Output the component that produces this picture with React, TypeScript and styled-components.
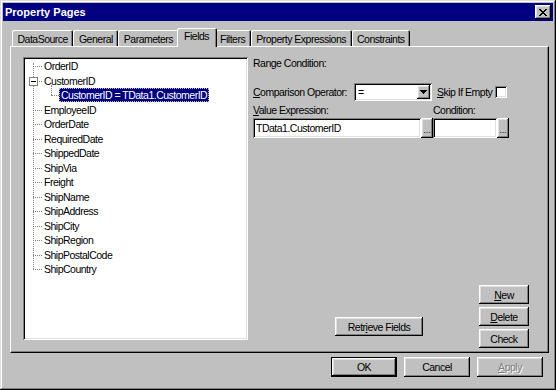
import React from "react"
import styled, { createGlobalStyle, css } from "styled-components"

const GlobalStyle = createGlobalStyle`
  html, body {
    margin: 0;
    padding: 0;
    background: #c0c0c0;
  }
  body {
    font-family: "Liberation Sans", Arial, sans-serif;
    font-size: 10.5px;
    letter-spacing: -0.5px;
    color: #000;
  }
  * {
    box-sizing: border-box;
  }
`

const raised = css`
  background: #c0c0c0;
  box-shadow: inset -1px -1px #000, inset 1px 1px #fff, inset -2px -2px #808080, inset 2px 2px #dfdfdf;
`
const sunken = css`
  background: #fff;
  box-shadow: inset 1px 1px #808080, inset -1px -1px #fff, inset 2px 2px #000, inset -2px -2px #dfdfdf;
`

const StyledWindow = styled.div`
  width: 556px;
  height: 390px;
  padding: 3px;
  display: flex;
  flex-direction: column;
  background: #c0c0c0;
  box-shadow: inset -1px -1px #000, inset 1px 1px #dfdfdf, inset -2px -2px #808080, inset 2px 2px #fff;
`
const StyledTitleBar = styled.div`
  height: 18px;
  flex-shrink: 0;
  padding: 0 2px;
  display: flex;
  align-items: center;
  justify-content: space-between;
  background: #000080;
  color: #fff;
`
const StyledTitle = styled.span`
  font-size: 11px;
  font-weight: bold;
  letter-spacing: 0;
`
const StyledCloseButton = styled.div`
  ${raised};
  width: 16px;
  height: 14px;
  display: flex;
  align-items: center;
  justify-content: center;
  padding-right: 1px;
`
const StyledBody = styled.div`
  flex: 1;
  display: flex;
  flex-direction: column;
  padding: 7px 4px 0 7px;
`
const StyledTabRow = styled.div`
  height: 18px;
  display: flex;
  align-items: flex-end;
  padding-left: 2px;
  position: relative;
  z-index: 2;
`
const StyledTab = styled.div<{ $active?: boolean }>`
  height: ${p => (p.$active ? 19 : 16)}px;
  margin: ${p => (p.$active ? "0 -2px -1px" : "0")};
  padding: ${p => (p.$active ? "2px 7.5px 0" : "3px 5.5px 0")};
  line-height: 12px;
  white-space: nowrap;
  background: #c0c0c0;
  border-radius: 2px 2px 0 0;
  box-shadow: inset 1px 1px #fff, inset -1px 0 #000, inset -2px 0 #808080;
  position: relative;
  z-index: ${p => (p.$active ? 2 : 1)};
`
const StyledPanel = styled.div`
  height: 307px;
  flex-shrink: 0;
  display: flex;
  gap: 5px;
  padding: 10px 19px 4px 12px;
  border-top: 1px solid #fff;
  border-left: 1px solid #fff;
  border-right: 1px solid #000;
  border-bottom: 1px solid #000;
  box-shadow: inset -1px -1px #808080;
`
const StyledTreeBox = styled.div`
  ${sunken};
  width: 225px;
  height: 283px;
  padding: 2px;
  flex-shrink: 0;
  align-self: flex-start;
`
const StyledTreeList = styled.ul`
  position: relative;
  list-style: none;
  margin: 0;
  padding: 0;

  &::before {
    content: "";
    position: absolute;
    left: 8px;
    top: 4px;
    height: 206px;
    border-left: 1px dotted #808080;
  }
`
const StyledTreeRow = styled.li<{ $level: number }>`
  position: relative;
  height: 14.5px;
  padding-left: ${p => (p.$level ? 34 : 17)}px;
  white-space: nowrap;

  &::before {
    content: "";
    position: absolute;
    left: ${p => (p.$level ? 26 : 8)}px;
    top: 7px;
    width: ${p => (p.$level ? 8 : 9)}px;
    border-top: 1px dotted #808080;
  }

  ${p => p.$level > 0 && css`
    &::after {
      content: "";
      position: absolute;
      left: 26px;
      top: -3px;
      height: 10px;
      border-left: 1px dotted #808080;
    }
  `}
`
const StyledTreeLabel = styled.span<{ $selected?: boolean }>`
  display: inline-block;
  height: 14px;
  line-height: 14px;
  padding: 0 2px;
  ${p => p.$selected && css`
    background: #000080;
    color: #fff;
    outline: 1px dotted #c0c0a0;
    outline-offset: -1px;
  `}
`
const StyledExpandBox = styled.span`
  position: absolute;
  left: 4px;
  top: 3px;
  width: 9px;
  height: 9px;
  border: 1px solid #808080;
  background: #fff;
  z-index: 1;

  &::after {
    content: "";
    position: absolute;
    left: 1px;
    top: 3px;
    width: 5px;
    height: 1px;
    background: #000;
  }
`
const StyledRightPane = styled.div`
  flex: 1;
  display: flex;
  flex-direction: column;
`
const StyledText = styled.div<{ $width?: number }>`
  line-height: 13px;
  white-space: nowrap;
  ${p => p.$width !== undefined && css`width: ${p.$width}px; flex-shrink: 0;`}
`
const StyledCompareRow = styled.div`
  margin-top: 13px;
  height: 18px;
  display: flex;
  align-items: center;
`
const StyledSelect = styled.div`
  ${sunken};
  width: 78px;
  height: 18px;
  padding: 2px;
  display: flex;
  align-items: center;
  margin-right: 5px;
`
const StyledSelectValue = styled.span`
  flex: 1;
  padding-left: 2px;
`
const StyledDropButton = styled.div`
  ${raised};
  width: 13px;
  height: 14px;
  display: flex;
  align-items: center;
  justify-content: center;
`
const StyledCheckbox = styled.div`
  ${sunken};
  width: 12px;
  height: 12px;
  flex-shrink: 0;
`
const StyledLabelRow = styled.div`
  margin-top: 3px;
  display: flex;
`
const StyledInputRow = styled.div`
  margin-top: 1px;
  height: 20px;
  display: flex;
`
const StyledInput = styled.div<{ $width: number }>`
  ${sunken};
  width: ${p => p.$width}px;
  height: 20px;
  padding: 0 3px;
  line-height: 20px;
  white-space: nowrap;
  overflow: hidden;
`
const StyledEllipsisButton = styled.div`
  ${raised};
  width: 12px;
  height: 20px;
  display: flex;
  align-items: flex-end;
  justify-content: center;
  padding-bottom: 3px;
  font-size: 9px;
  line-height: 9px;
  letter-spacing: 0;
`
const StyledBottomArea = styled.div`
  margin-top: auto;
  display: flex;
  align-items: flex-end;
  justify-content: flex-end;
  gap: 56px;
`
const StyledButtonColumn = styled.div`
  display: flex;
  flex-direction: column;
  gap: 3px;
`
const StyledButton = styled.div<{ $width: number; $height?: number; $default?: boolean; $disabled?: boolean }>`
  ${raised};
  width: ${p => p.$width}px;
  height: ${p => p.$height ?? 19}px;
  display: flex;
  align-items: center;
  justify-content: center;
  white-space: nowrap;
  ${p => p.$default && css`
    box-shadow: inset 0 0 0 1px #000, inset -2px -2px #000, inset 2px 2px #fff, inset -3px -3px #808080, inset 3px 3px #dfdfdf;
  `}
  ${p => p.$disabled && css`
    color: #808080;
    text-shadow: 1px 1px #fff;
  `}
`
const StyledRetrieve = styled(StyledButton)`
  margin-bottom: 12px;
`
const StyledFooter = styled.div`
  display: flex;
  justify-content: flex-end;
  gap: 7px;
  padding: 4px 6px 0 0;
`

const tabs = ["DataSource", "General", "Parameters", "Fields", "Filters", "Property Expressions", "Constraints"]

const fields = [
  "OrderID", "CustomerID", "EmployeeID", "OrderDate", "RequiredDate", "ShippedDate", "ShipVia",
  "Freight", "ShipName", "ShipAddress", "ShipCity", "ShipRegion", "ShipPostalCode", "ShipCountry",
]

function CloseIcon() {
  return (
    <svg width="8" height="7" viewBox="0 0 8 7" shapeRendering="crispEdges">
      <path
        fill="#000"
        d="M0 0h2v1h-2z M6 0h2v1h-2z M1 1h2v1h-2z M5 1h2v1h-2z M2 2h4v1h-4z M3 3h2v1h-2z M2 4h4v1h-4z M1 5h2v1h-2z M5 5h2v1h-2z M0 6h2v1h-2z M6 6h2v1h-2z"
      />
    </svg>
  )
}

function ArrowDown() {
  return (
    <svg width="7" height="4" viewBox="0 0 7 4" shapeRendering="crispEdges">
      <path fill="#000" d="M0 0h7v1h-7z M1 1h5v1h-5z M2 2h3v1h-3z M3 3h1v1h-1z" />
    </svg>
  )
}

function FieldTree() {
  return (
    <StyledTreeBox>
      <StyledTreeList>
        {fields.map(f => (
          <React.Fragment key={f}>
            <StyledTreeRow $level={0}>
              {f === "CustomerID" && <StyledExpandBox />}
              <StyledTreeLabel>{f}</StyledTreeLabel>
            </StyledTreeRow>
            {f === "CustomerID" && (
              <StyledTreeRow $level={1}>
                <StyledTreeLabel $selected>CustomerID = TData1.CustomerID</StyledTreeLabel>
              </StyledTreeRow>
            )}
          </React.Fragment>
        ))}
      </StyledTreeList>
    </StyledTreeBox>
  )
}

export default function App() {
  return (
    <>
      <GlobalStyle />
      <StyledWindow>
        <StyledTitleBar>
          <StyledTitle>Property Pages</StyledTitle>
          <StyledCloseButton><CloseIcon /></StyledCloseButton>
        </StyledTitleBar>

        <StyledBody>
          <StyledTabRow>
            {tabs.map(t => (
              <StyledTab key={t} $active={t === "Fields"}>{t}</StyledTab>
            ))}
          </StyledTabRow>

          <StyledPanel>
            <FieldTree />

            <StyledRightPane>
              <StyledText>Range Condition:</StyledText>

              <StyledCompareRow>
                <StyledText $width={101}><u>C</u>omparison Operator:</StyledText>
                <StyledSelect>
                  <StyledSelectValue>=</StyledSelectValue>
                  <StyledDropButton><ArrowDown /></StyledDropButton>
                </StyledSelect>
                <StyledText $width={58}><u>S</u>kip If Empty</StyledText>
                <StyledCheckbox />
              </StyledCompareRow>

              <StyledLabelRow>
                <StyledText $width={180}><u>V</u>alue Expression:</StyledText>
                <StyledText>Condition:</StyledText>
              </StyledLabelRow>

              <StyledInputRow>
                <StyledInput $width={168}>TData1.CustomerID</StyledInput>
                <StyledEllipsisButton>...</StyledEllipsisButton>
                <StyledInput $width={64} />
                <StyledEllipsisButton>...</StyledEllipsisButton>
              </StyledInputRow>

              <StyledBottomArea>
                <StyledRetrieve $width={88}>Retr<u>i</u>eve Fields</StyledRetrieve>
                <StyledButtonColumn>
                  <StyledButton $width={50}><u>N</u>ew</StyledButton>
                  <StyledButton $width={50}><u>D</u>elete</StyledButton>
                  <StyledButton $width={50}>Check</StyledButton>
                </StyledButtonColumn>
              </StyledBottomArea>
            </StyledRightPane>
          </StyledPanel>

          <StyledFooter>
            <StyledButton $width={66} $height={20} $default>OK</StyledButton>
            <StyledButton $width={66} $height={20}>Cancel</StyledButton>
            <StyledButton $width={66} $height={20} $disabled><u>A</u>pply</StyledButton>
          </StyledFooter>
        </StyledBody>
      </StyledWindow>
    </>
  )
}
